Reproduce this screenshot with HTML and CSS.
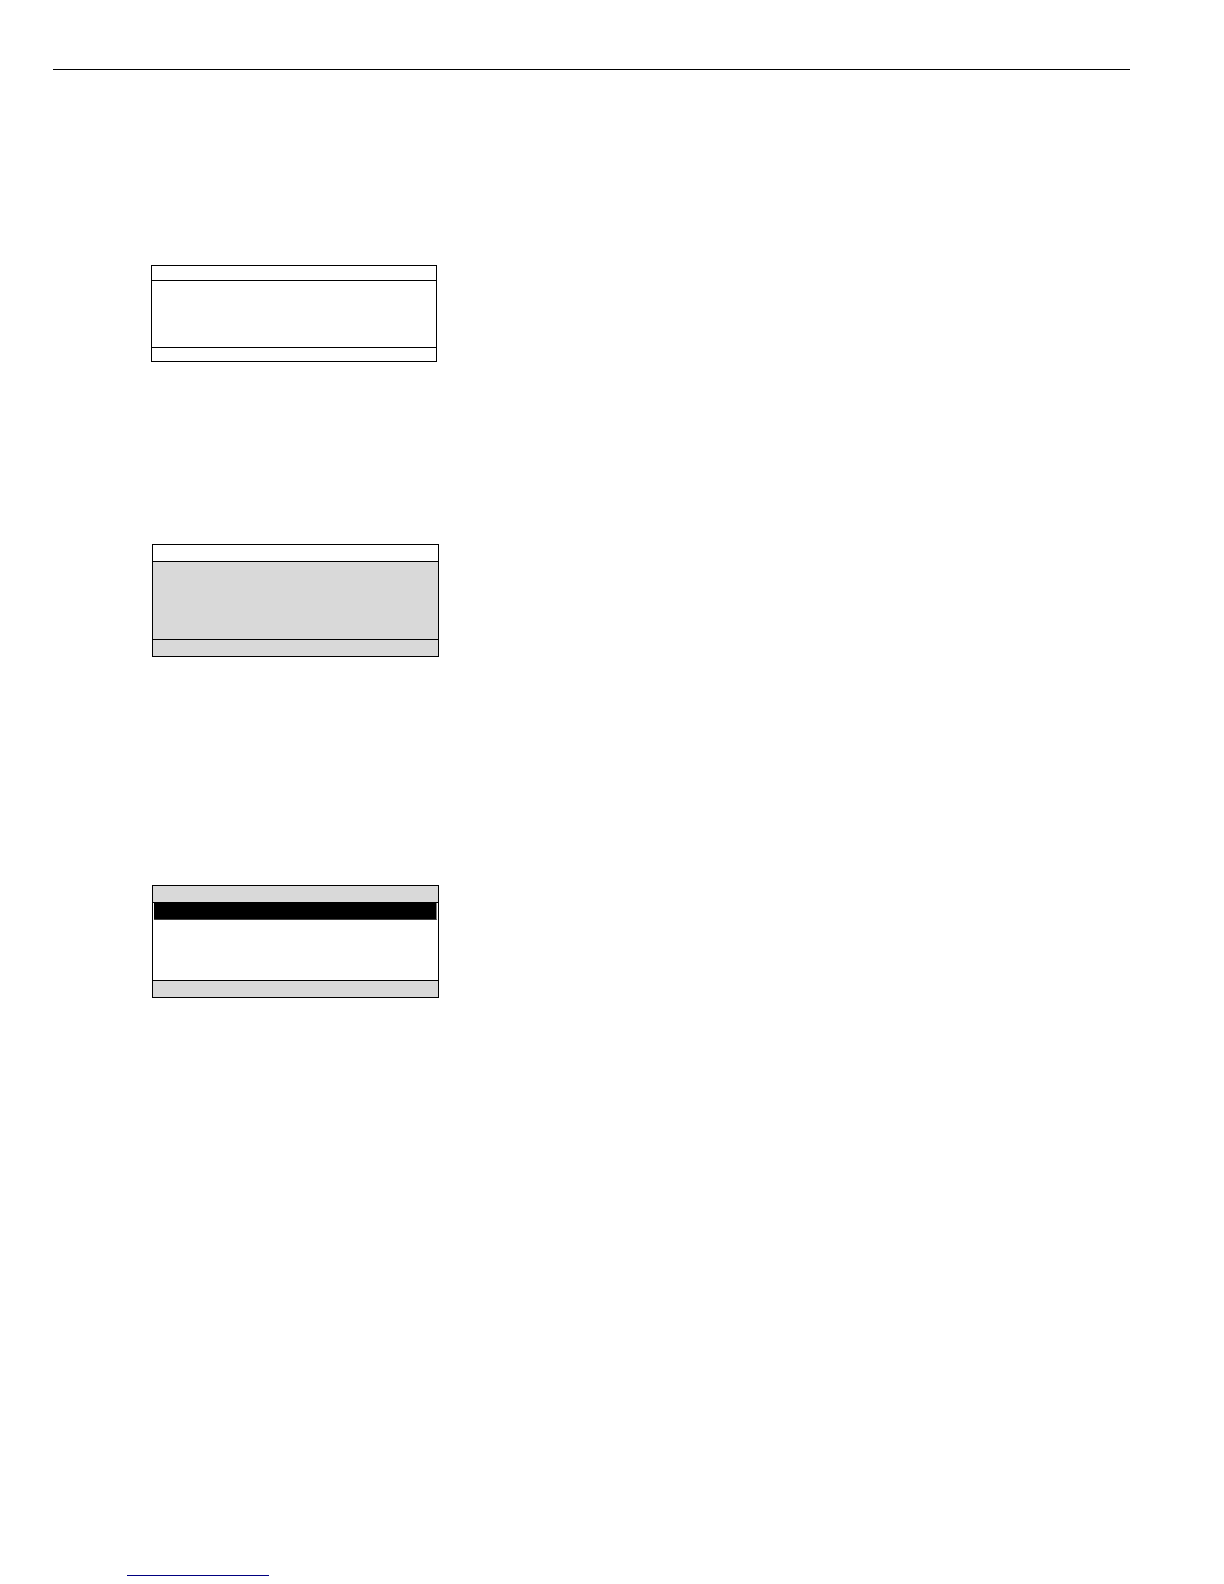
FILE: index.html
```
<!DOCTYPE html>
<html>
    <head>
        <meta charset="utf-8">
        <title>Display screens</title>
        <meta name="viewport" content="width=device-width, initial-scale=1">
        <link rel="stylesheet" href="styles.css">
    </head>
    <body>
        <hr class="page-rule">
        <main class="screens">
            <section class="screen">
                <div class="screen-head"></div>
                <div class="screen-body"></div>
                <div class="screen-foot"></div>
            </section>
            <section class="screen tall message">
                <div class="screen-head"></div>
                <div class="screen-body shaded"></div>
                <div class="screen-foot shaded"></div>
            </section>
            <section class="screen tall menu">
                <div class="screen-head shaded"></div>
                <div class="screen-body">
                    <div class="selected"></div>
                </div>
                <div class="screen-foot shaded"></div>
            </section>
        </main>
        <footer class="page-footer">
            <hr class="footer-rule">
        </footer>
    </body>
</html>
```

FILE: styles.css
```
*{
    box-sizing: border-box;
}
body{
    display: flex;
    flex-direction: column;
    min-height: 100vh;
    margin: 0;
    padding: 69px 94px 8px 53px;
    background-color: white;
    font-family: "Liberation Sans", sans-serif;
}
hr{
    height: 1px;
    margin: 0;
    border: 0;
}
.page-rule{
    width: 100%;
    background-color: black;
}
.screens{
    flex: 1;
    padding: 195px 0 0 98px;
}

/* display frames */
.screen{
    max-width: 286px;
    border: 1px solid black;
}
.screen-head{
    height: 15px;
    border-bottom: 1px solid black;
}
.screen-body{
    height: 66px;
}
.screen-foot{
    height: 14px;
    border-top: 1px solid black;
}
.shaded{
    background-color: #d9d9d9;
}

.tall{
    max-width: 287px;
    margin-left: 1px;
}
.tall .screen-head,
.tall .screen-foot{
    height: 17px;
}
.tall .screen-body{
    height: 77px;
}
.message{
    margin-top: 182px;
}
.menu{
    margin-top: 228px;
}

/* highlighted menu line */
.menu .screen-body{
    padding: 0 1px;
}
.selected{
    height: 17px;
    border-right: 1px solid #808080;
    border-bottom: 1px solid #404040;
    background-color: black;
}

.page-footer{
    padding-left: 74px;
}
.footer-rule{
    max-width: 142px;
    background-color: #000080;
}
```
